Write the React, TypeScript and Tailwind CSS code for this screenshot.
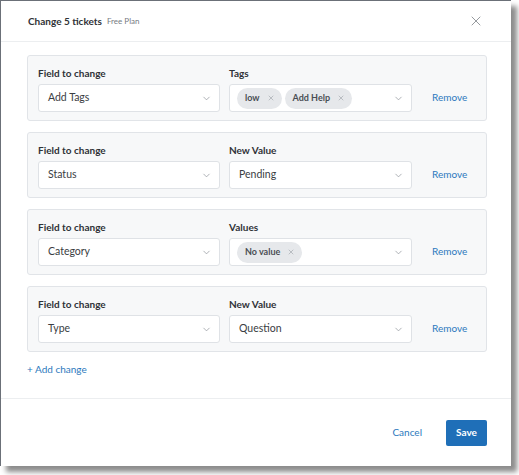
import { ChevronDown, X } from "lucide-react";

type Row = {
  field: string;
  label: string;
  value?: string;
  chips?: string[];
};

const rows: Row[] = [
  { field: "Add Tags", label: "Tags", chips: ["low", "Add Help"] },
  { field: "Status", label: "New Value", value: "Pending" },
  { field: "Category", label: "Values", chips: ["No value"] },
  { field: "Type", label: "New Value", value: "Question" },
];

function Select({ children }: { children: React.ReactNode }) {
  return (
    <div className="flex h-[28px] items-center rounded-[3px] border border-[#dfe2e6] bg-white pl-[9px] pr-[7px]">
      <div className="flex flex-1 items-center gap-[3px] text-[10.5px] text-[#3a3d42]">{children}</div>
      <ChevronDown size={11} strokeWidth={1.5} className="text-[#8a8f96]" />
    </div>
  );
}

function Chip({ text, first }: { text: string; first: boolean }) {
  return (
    <span
      className={
        "flex h-[21px] items-center gap-[7px] rounded-full bg-[#e6e8eb] pl-[8px] pr-[7px] text-[9px] font-bold text-[#4a4e54] " +
        (first ? "-ml-[2px]" : "")
      }
    >
      {text}
      <X size={8} strokeWidth={1.5} className="text-[#8d9298]" />
    </span>
  );
}

export default function App() {
  return (
    <div className="min-h-screen bg-white" style={{ fontFamily: 'Lato, "Open Sans", sans-serif' }}>
      <div className="flex h-[466px] w-[511px] flex-col border-l border-t border-[#6b7078] bg-white shadow-[6px_6px_5px_rgba(0,0,0,0.45)]">
        <div className="flex h-[41px] shrink-0 items-center border-b border-[#eceef0] pl-[27px] pr-[27px]">
          <span className="text-[10px] font-bold text-[#2f3237]">Change 5 tickets</span>
          <span className="ml-[5px] text-[8px] text-[#767b82]">Free Plan</span>
          <X size={16} strokeWidth={1.1} className="ml-auto text-[#6f747a]" />
        </div>
        <div className="flex flex-1 flex-col pl-[26px] pr-[24px] pt-[13px]">
          <div className="flex flex-col gap-[11px]">
            {rows.map((r, i) => (
              <div key={i} className="flex items-end rounded-[3px] border border-[#e1e4e8] bg-[#f7f8f9] px-[10px] pb-[8px] pt-[10px]">
                <div className="w-[182px]">
                  <div className="mb-[4px] text-[10px] leading-[14px] font-bold text-[#2f3237]">Field to change</div>
                  <Select>{r.field}</Select>
                </div>
                <div className="ml-[9px] w-[183px]">
                  <div className="mb-[4px] text-[10px] leading-[14px] font-bold text-[#2f3237]">{r.label}</div>
                  <Select>
                    {r.chips ? r.chips.map((c, j) => <Chip key={c} text={c} first={j === 0} />) : r.value}
                  </Select>
                </div>
                <span className="mb-[7px] ml-[20px] text-[10px] text-[#2c79bd]">Remove</span>
              </div>
            ))}
          </div>
          <div className="mt-[10px] text-[10px] text-[#2c79bd]">+ Add change</div>
        </div>
        <div className="flex h-[68px] shrink-0 items-center justify-end gap-[24px] border-t border-[#eceef0] pr-[24px]">
          <span className="text-[10px] text-[#2c79bd]">Cancel</span>
          <button className="h-[26px] w-[41px] rounded-[2px] bg-[#1f6fb8] text-[10px] font-bold text-white">Save</button>
        </div>
      </div>
    </div>
  );
}
